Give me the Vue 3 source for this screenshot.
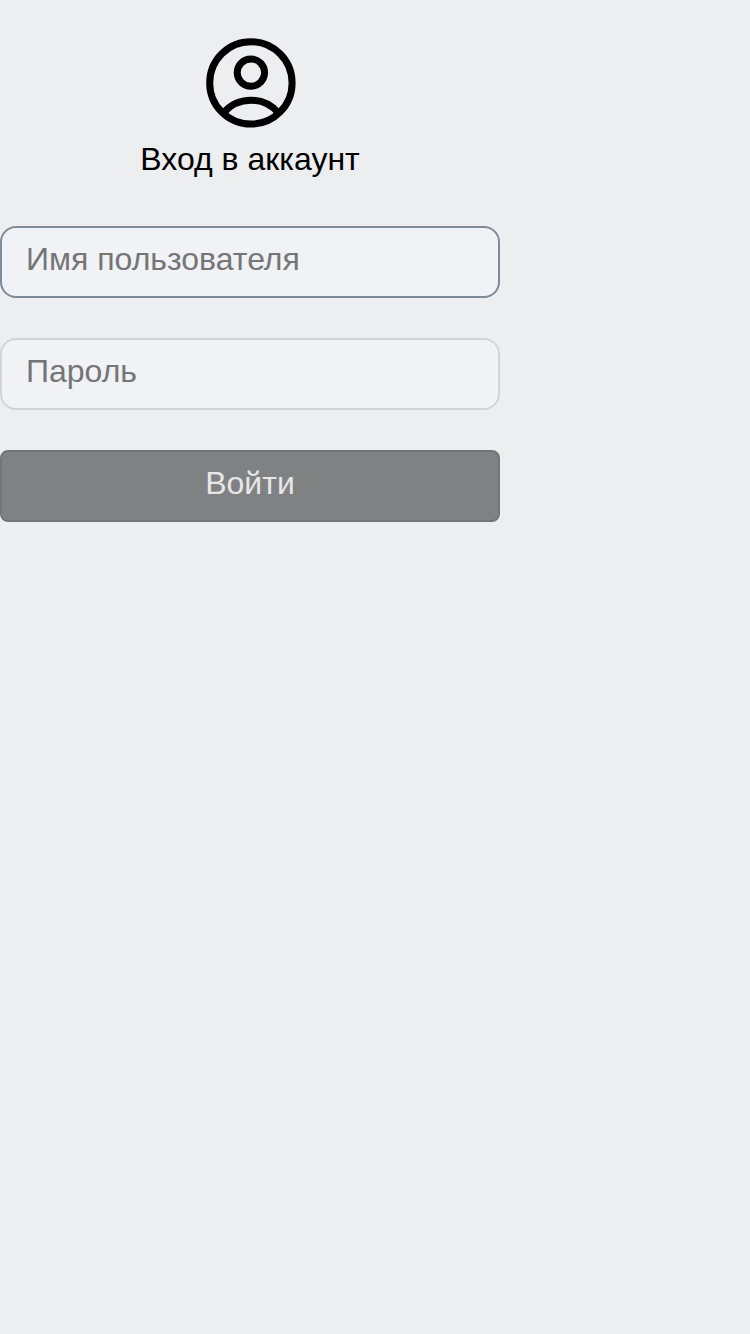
<script setup>
import { ref } from 'vue'

const username = ref('')
const password = ref('')
</script>

<template>
  <form class="login" @submit.prevent>
    <header class="heading">
      <svg class="avatar" viewBox="0 0 90 90" fill="none" stroke="currentColor" stroke-width="7" aria-hidden="true">
        <circle cx="44.9" cy="44.9" r="41.2" />
        <circle cx="44.9" cy="34.600" r="13.700" />
        <path d="M17.400 75A36 36 0 0 1 72.400 75" />
      </svg>
      <h1 class="title">Вход в аккаунт</h1>
    </header>
    <input v-model="username" class="field field-active" type="text" placeholder="Имя пользователя" />
    <input v-model="password" class="field" type="password" placeholder="Пароль" />
    <button class="submit" type="submit" disabled>Войти</button>
  </form>
</template>

<style>
body {
  background: #edeef0;
}
</style>

<style scoped>
.login {
  display: flex;
  flex-direction: column;
  gap: 40px;
  width: 500px;
  padding-top: 38px;
  font-family: "Liberation Sans", Arial, sans-serif;
}
.heading {
  display: flex;
  flex-direction: column;
  align-items: center;
  height: 148px;
}
.avatar {
  width: 90px;
  height: 90px;
  margin-left: 2px;
  color: #000;
}
.title {
  margin: 13px 0 0;
  font-size: 32px;
  font-weight: 400;
  line-height: 37px;
}
.field,
.submit {
  box-sizing: border-box;
  width: 500px;
  height: 72px;
  margin: 0;
  font: 32px/37px "Liberation Sans", Arial, sans-serif;
}
.field {
  padding: 0 24px 6px;
  border: 2px solid #d3d4d6;
  border-radius: 16px;
  background: #f0f2f5;
  outline: none;
}
.field-active {
  border-color: #7e8b99;
}
.field::placeholder {
  color: #757575;
}
.submit {
  padding: 0 0 6px;
  border: 2px solid #747577;
  border-radius: 8px;
  background: #808183;
  color: #e6e7e8;
}
</style>
